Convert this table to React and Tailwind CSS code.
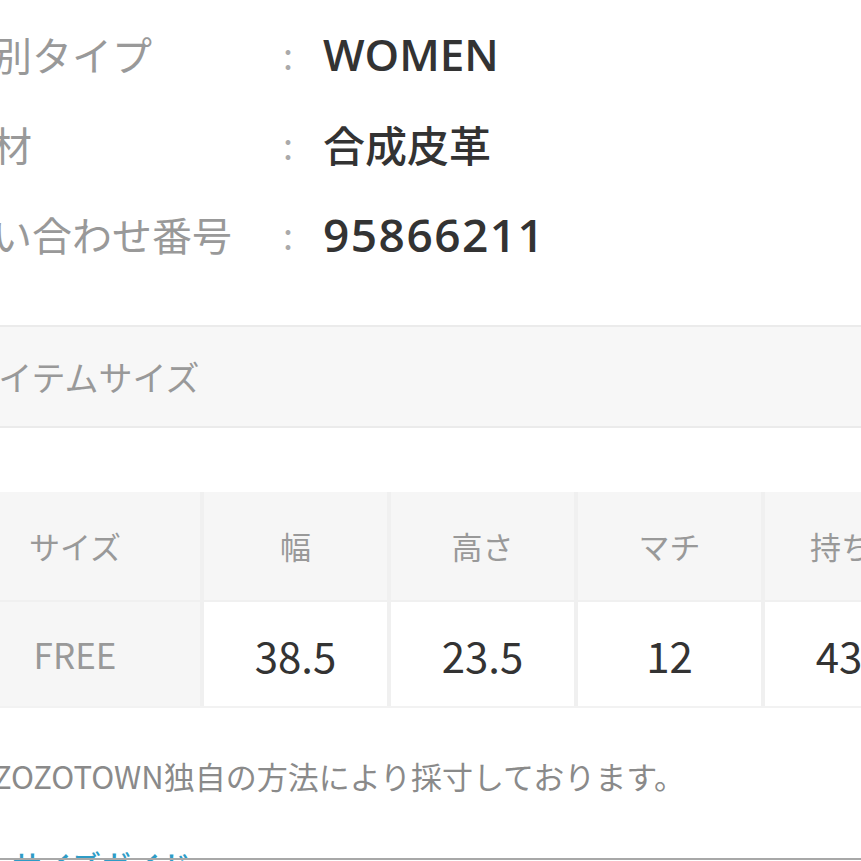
import React from "react";

const info = [
  { label: "性別タイプ", value: "WOMEN", kind: "word" },
  { label: "素材", value: "合成皮革", kind: "cjk" },
  { label: "問い合わせ番号", value: "95866211", kind: "num" },
];

const heads = ["幅", "高さ", "マチ", "持ち手"];
const values = ["38.5", "23.5", "12", "43.5"];

export default function App() {
  return (
    <div
      className="relative w-[861px] h-[861px] overflow-hidden bg-white flex flex-col"
      style={{ fontFamily: '"Noto Sans CJK JP", "Noto Sans", sans-serif' }}
    >
      {/* spec rows */}
      <div className="pt-[9px] flex flex-col">
        {info.map((row) => (
          <div key={row.label} className="h-[90px] flex items-center">
            <div className="ml-[-48px] w-[324px] shrink-0 text-[40px] text-[#999999] whitespace-nowrap leading-none">
              {row.label}
            </div>
            <div className="w-[47px] shrink-0 text-[36px] text-[#aaaaaa] leading-none pl-[7px]">:</div>
            {row.kind === "word" && (
              <div className="text-[44px] font-semibold text-[#333333] leading-none whitespace-nowrap font-['Open_Sans',sans-serif]">
                {row.value}
              </div>
            )}
            {row.kind === "num" && (
              <div className="text-[46px] font-semibold text-[#333333] leading-none whitespace-nowrap font-['Open_Sans',sans-serif] tracking-[1.5px]">
                {row.value}
              </div>
            )}
            {row.kind === "cjk" && (
              <div className="text-[42px] font-medium text-[#333333] leading-none whitespace-nowrap">
                {row.value}
              </div>
            )}
          </div>
        ))}
      </div>

      {/* item size header */}
      <div className="mt-[46px] h-[103px] shrink-0 bg-[#f7f7f7] border-y-2 border-[#ebebeb] flex items-center">
        <span className="ml-[-34px] text-[34px] text-[#999999] whitespace-nowrap leading-none">アイテムサイズ</span>
      </div>

      {/* size table */}
      <div className="mt-[64px] shrink-0 ml-[-50px] flex flex-col gap-[2px] bg-[#f0f0f0] w-[1200px] border-b-2 border-[#f2f2f2]">
        <div className="flex gap-[2px] h-[108px]">
          <div className="w-[250px] shrink-0 bg-[#f6f6f6] flex items-center justify-center text-[31px] text-[#999999]">
            サイズ
          </div>
          {heads.map((h) => (
            <div
              key={h}
              className="w-[183px] shrink-0 bg-[#f6f6f6] flex items-center justify-center text-[31px] text-[#999999] ml-[2px] first:ml-0"
            >
              {h}
            </div>
          ))}
        </div>
        <div className="flex gap-[2px] h-[104px]">
          <div className="w-[250px] shrink-0 bg-[#f6f6f6] flex items-center justify-center text-[35px] text-[#999999]">
            FREE
          </div>
          {values.map((v) => (
            <div
              key={v}
              className="w-[183px] shrink-0 bg-white flex items-center justify-center text-[42px] text-[#333333] ml-[2px] first:ml-0"
            >
              {v}
            </div>
          ))}
        </div>
      </div>

      {/* note */}
      <div className="mt-[52px] ml-[-7px] text-[31px] text-[#8a8a8a] whitespace-nowrap leading-none">
        ZOZOTOWN独自の方法により採寸しております。
      </div>

      {/* size guide link, cut off at the bottom */}
      <div className="mt-[58px] shrink-0 pl-[12px] text-[30px] text-[#2e9cc6] font-medium whitespace-nowrap leading-none">
        サイズガイド
      </div>
      <div className="absolute left-0 right-0 bottom-[1px] h-[2px] bg-[#a8a8a8]" />
    </div>
  );
}
